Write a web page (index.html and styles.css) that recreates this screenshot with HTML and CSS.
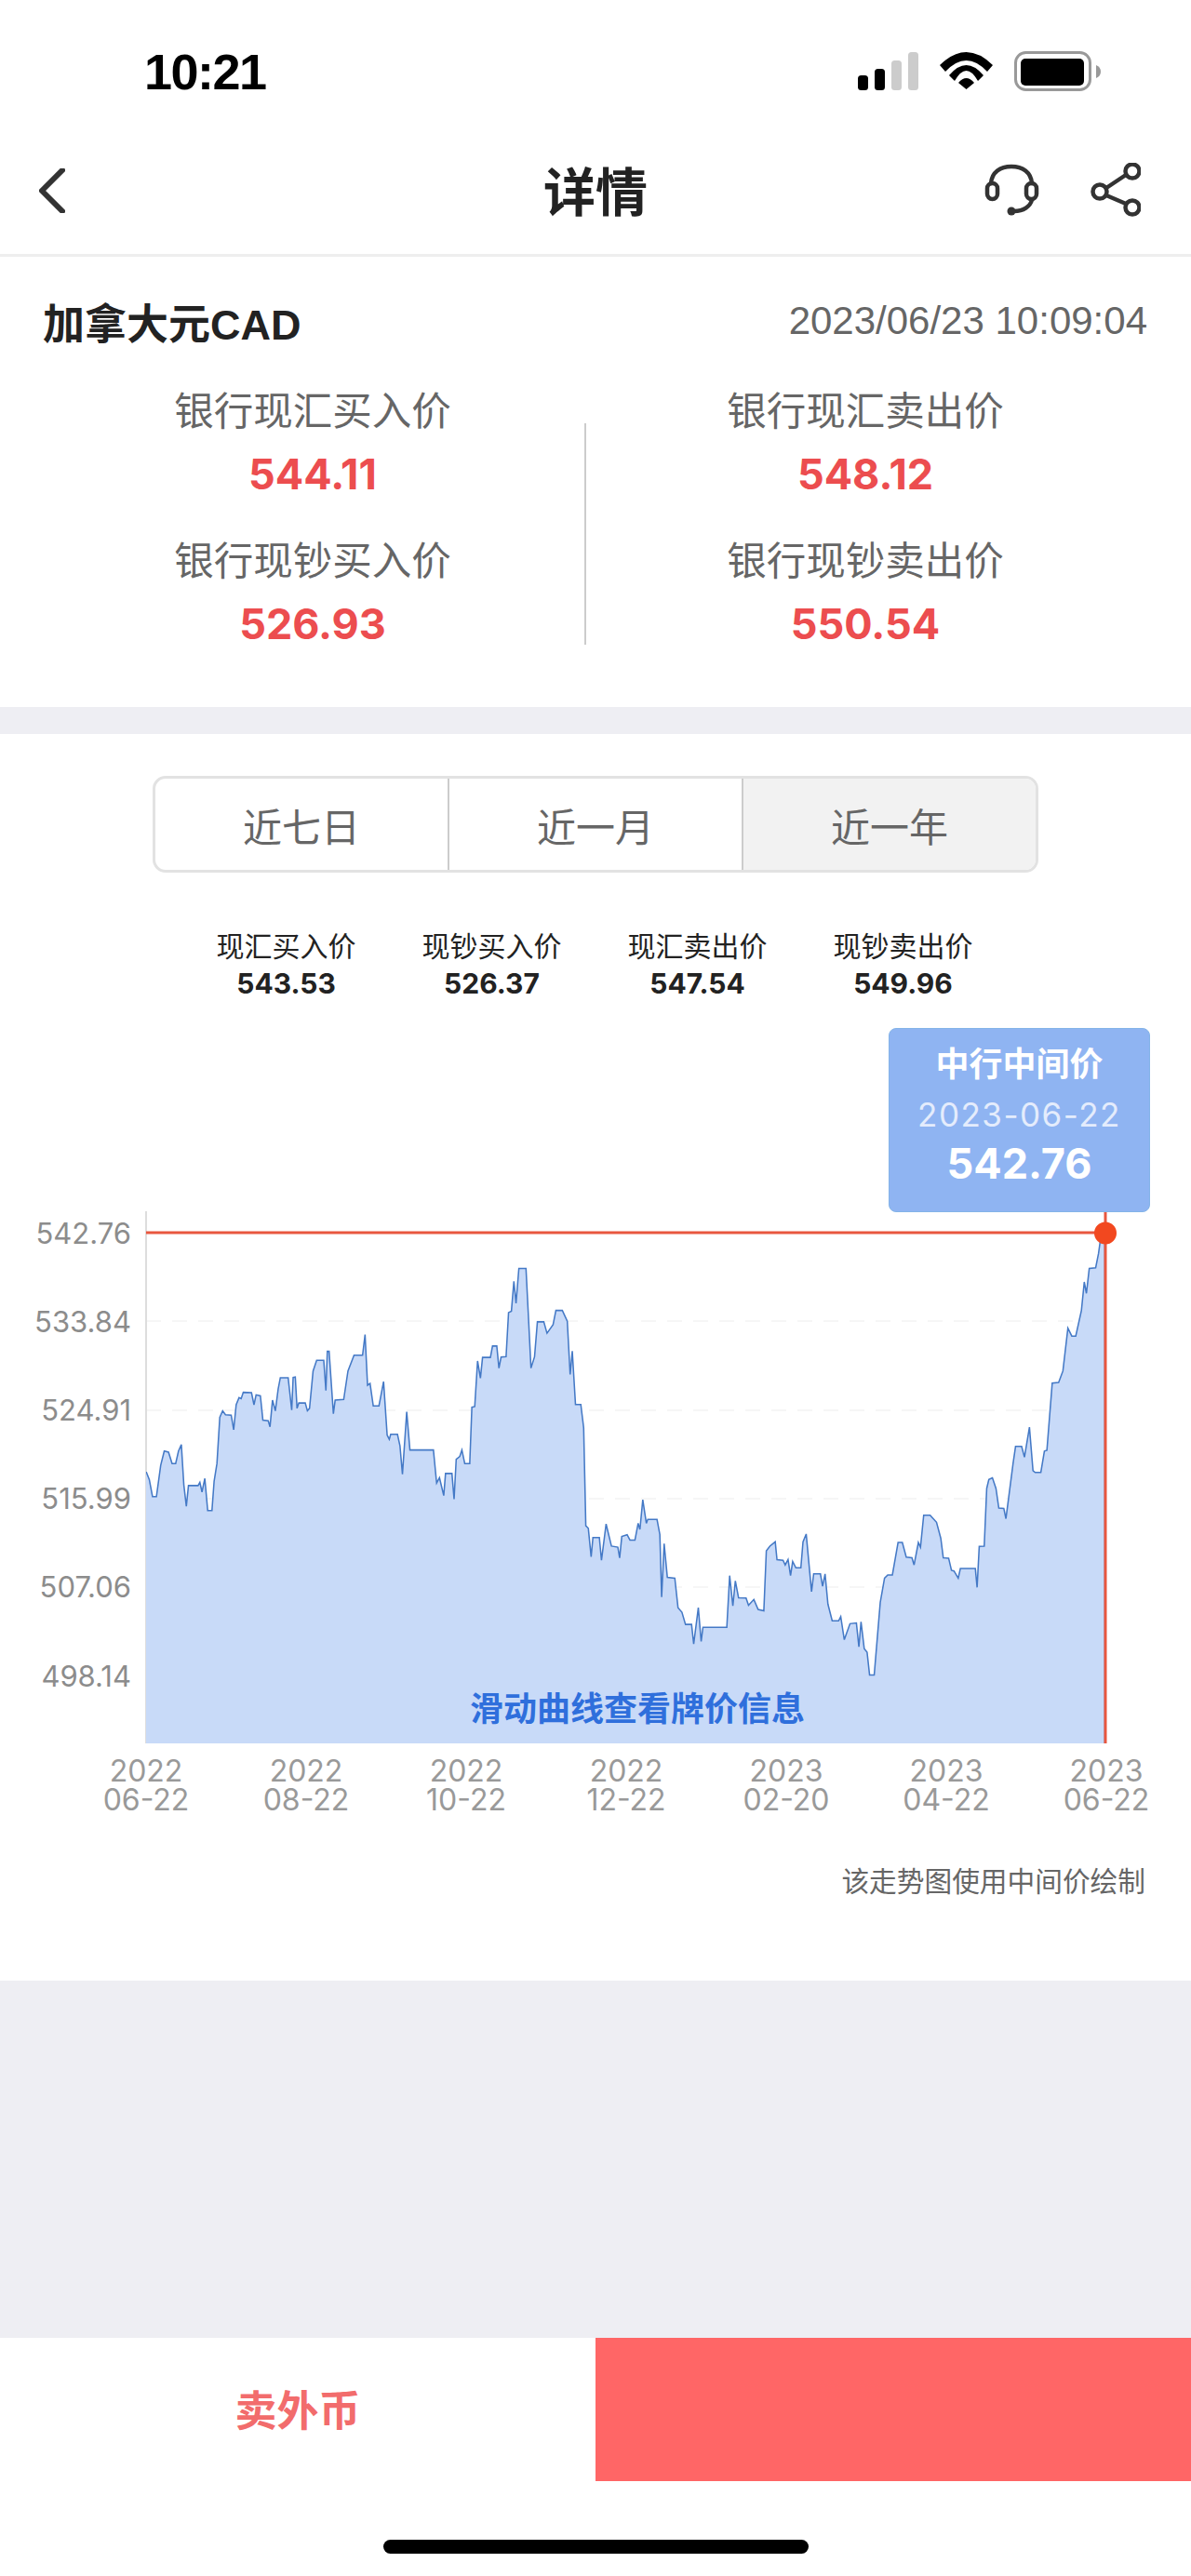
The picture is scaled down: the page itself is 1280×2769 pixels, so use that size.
FILE: index.html
```html
<!DOCTYPE html>
<html lang="zh">

<head>
  <meta charset="utf-8">
  <title>详情</title>
  <meta name="viewport" content="width=device-width, initial-scale=1.0">
  <link rel="stylesheet" href="styles.css">
</head>

<body>
  <div class="page">
    <!--status bar-->
    <div class="status">
      <span class="status-time">10:21</span>
      <div class="status-icons">
        <svg width="65" height="42" viewBox="0 0 65 42">
          <rect x="0" y="25" width="11" height="16" rx="3.5" fill="#000"/>
          <rect x="18" y="18" width="11" height="23" rx="3.5" fill="#000"/>
          <rect x="36" y="9" width="11" height="32" rx="3.5" fill="#ccc"/>
          <rect x="54" y="0" width="11" height="41" rx="3.5" fill="#ccc"/>
        </svg>
        <svg width="57" height="42" viewBox="0 0 57 42">
          <path d="M0 14Q28.5 -14 57 14L51 21Q28.5 -3 6 21Z" fill="#000"/>
          <path d="M10 25Q28.5 3 47 25L41 31Q28.5 9 16 31Z" fill="#000"/>
          <path d="M20 33Q28.5 23 37 33L28.5 40Z" fill="#000"/>
        </svg>
        <svg width="94" height="44" viewBox="0 0 94 44">
          <rect x="1.5" y="1.5" width="80" height="40" rx="11" fill="none" stroke="#999" stroke-width="3"/>
          <rect x="7" y="8" width="68" height="29" rx="5" fill="#000"/>
          <path d="M88 15Q93 17 93 22Q93 27 88 29Z" fill="#999"/>
        </svg>
      </div>
    </div>

    <!--title bar-->
    <header class="nav">
      <svg class="nav-back" width="28" height="48" viewBox="0 0 28 48">
        <path d="M25 2L3 24L25 46" fill="none" stroke="#333" stroke-width="6" stroke-linecap="round" stroke-linejoin="round"/>
      </svg>
      <h1 class="nav-title">详情</h1>
      <div class="nav-icons">
        <svg width="60" height="60" viewBox="0 0 60 60">
          <g fill="none" stroke="#333" stroke-width="4.5" stroke-linecap="round">
            <path d="M8 22C9 10 18 4 30 4C42 4 51 10 52 22"/>
            <rect x="4" y="22" width="11" height="17" rx="5.5"/>
            <rect x="46" y="22" width="11" height="17" rx="5.5"/>
            <path d="M52 40C50 47 43 52 33 52"/>
          </g>
          <circle cx="30" cy="52" r="4.5" fill="#333"/>
        </svg>
        <svg width="54" height="60" viewBox="0 0 54 60">
          <g fill="none" stroke="#333" stroke-width="4.5">
            <circle cx="10" cy="31" r="7.5"/>
            <circle cx="45" cy="9" r="7.5"/>
            <circle cx="45" cy="48" r="7.5"/>
            <path d="M17 27L38 13M17 35L38 44"/>
          </g>
        </svg>
      </div>
    </header>

    <!--quote card-->
    <section class="rate-card">
      <div class="rate-head">
        <h2 class="rate-name">加拿大元CAD</h2>
        <span class="rate-date">2023/06/23 10:09:04</span>
      </div>
      <div class="rate-grid">
        <div class="rate-col">
          <div class="rate-item">
            <p class="rate-label">银行现汇买入价</p>
            <p class="rate-value">544.11</p>
          </div>
          <div class="rate-item">
            <p class="rate-label">银行现钞买入价</p>
            <p class="rate-value">526.93</p>
          </div>
        </div>
        <div class="rate-divider"></div>
        <div class="rate-col">
          <div class="rate-item">
            <p class="rate-label">银行现汇卖出价</p>
            <p class="rate-value">548.12</p>
          </div>
          <div class="rate-item">
            <p class="rate-label">银行现钞卖出价</p>
            <p class="rate-value">550.54</p>
          </div>
        </div>
      </div>
    </section>

    <!--chart card-->
    <section class="chart-card">
      <div class="tabs">
        <div class="tab">近七日</div>
        <div class="tab">近一月</div>
        <div class="tab tab-active">近一年</div>
      </div>

      <div class="legend">
        <div class="legend-item"><p class="legend-label">现汇买入价</p><p class="legend-value">543.53</p></div>
        <div class="legend-item"><p class="legend-label">现钞买入价</p><p class="legend-value">526.37</p></div>
        <div class="legend-item"><p class="legend-label">现汇卖出价</p><p class="legend-value">547.54</p></div>
        <div class="legend-item"><p class="legend-label">现钞卖出价</p><p class="legend-value">549.96</p></div>
      </div>

      <div class="chart">
        <svg class="chart-svg" width="1280" height="804" viewBox="0 1076 1280 804">
          <defs>
            <clipPath id="plot"><rect x="157" y="1300" width="1031" height="574"/></clipPath>
          </defs>
          <path class="chart-grid" d="M157 1420H1188M157 1516H1188M157 1611H1188M157 1706H1188"/>
          <path class="chart-axis" d="M157 1302V1874"/>
          <g clip-path="url(#plot)">
            <polygon class="chart-area" transform="translate(100 1290) scale(.38265)" points="100,1560 100,765 150,765 158,785 167,833 178,833 190,745 200,705 212,708 222,740 232,740 240,705 248,687 255,800 262,860 268,802 295,802 300,793 306,820 314,782 322,872 334,872 340,790 348,740 356,610 364,592 372,603 388,604 395,645 402,575 410,555 416,558 422,540 445,541 452,575 458,547 470,550 477,618 492,620 497,637 504,562 512,592 520,530 526,499 548,499 558,590 562,498 568,497 573,585 578,570 596,570 602,592 608,585 618,480 628,450 648,450 654,535 658,425 663,425 675,600 680,562 704,560 716,480 733,436 757,436 764,378 771,520 778,515 787,578 803,578 816,510 826,660 832,672 836,658 855,658 862,690 869,770 881,595 890,702 956,702 965,795 973,780 985,830 990,768 1008,768 1014,840 1020,728 1030,720 1036,702 1044,740 1058,740 1064,582 1072,580 1080,452 1088,500 1094,442 1116,442 1122,410 1134,410 1140,472 1146,441 1160,440 1167,316 1175,312 1182,228 1188,290 1196,192 1216,192 1224,350 1230,472 1240,440 1248,342 1266,342 1275,374 1292,350 1300,310 1318,310 1332,340 1340,490 1346,424 1355,574 1370,574 1378,640 1384,915 1391,922 1399,1002 1404,948 1422,948 1428,1012 1441,910 1456,972 1474,975 1479,1005 1485,945 1500,940 1508,955 1522,955 1531,908 1536,925 1544,842 1554,908 1558,897 1584,897 1592,940 1597,1115 1604,965 1613,1060 1634,1062 1643,1145 1654,1158 1664,1192 1681,1192 1687,1247 1700,1145 1708,1240 1713,1200 1780,1200 1788,1055 1797,1140 1804,1070 1813,1117 1834,1118 1841,1138 1856,1122 1868,1150 1884,1154 1891,985 1901,972 1916,960 1921,1010 1938,1012 1944,1025 1952,1010 1959,1055 1965,1015 1974,1033 1988,1033 1994,960 2003,938 2018,1100 2024,1050 2043,1050 2049,1085 2056,1050 2064,1135 2076,1182 2094,1182 2100,1170 2110,1235 2126,1190 2144,1188 2151,1255 2157,1185 2166,1260 2174,1270 2181,1334 2194,1334 2211,1130 2223,1062 2232,1053 2245,1053 2261,962 2273,962 2284,1003 2300,1005 2306,1025 2318,962 2324,975 2333,885 2351,885 2369,905 2381,950 2388,1005 2403,1006 2411,1040 2418,1042 2430,1062 2436,1035 2478,1035 2483,1088 2489,973 2503,972 2510,810 2516,785 2526,780 2536,810 2544,865 2558,866 2564,895 2584,740 2591,692 2608,692 2616,722 2630,638 2640,760 2646,765 2662,765 2672,705 2679,703 2694,514 2712,512 2724,480 2738,360 2749,382 2760,382 2776,310 2784,230 2790,262 2798,192 2816,190 2824,150 2831,100 2842,93 2842,1560"/>
          </g>
          <path class="chart-cross" d="M157 1325H1188M1188 1300V1874"/>
          <circle class="chart-dot" cx="1188" cy="1325.5" r="12"/>
          <text class="chart-y" x="141" y="1337">542.76</text>
          <text class="chart-y" x="141" y="1432">533.84</text>
          <text class="chart-y" x="141" y="1527">524.91</text>
          <text class="chart-y" x="141" y="1622">515.99</text>
          <text class="chart-y" x="141" y="1717">507.06</text>
          <text class="chart-y" x="141" y="1813">498.14</text>
          <text class="chart-hint" x="685" y="1850">滑动曲线查看牌价信息</text>
        </svg>

        <div class="tip">
          <p class="tip-title">中行中间价</p>
          <p class="tip-date">2023-06-22</p>
          <p class="tip-value">542.76</p>
        </div>
      </div>

      <div class="x-axis">
        <div>2022<br>06-22</div>
        <div>2022<br>08-22</div>
        <div>2022<br>10-22</div>
        <div>2022<br>12-22</div>
        <div>2023<br>02-20</div>
        <div>2023<br>04-22</div>
        <div>2023<br>06-22</div>
      </div>

      <p class="chart-note">该走势图使用中间价绘制</p>
    </section>

    <div class="spacer"></div>

    <!--bottom buttons-->
    <div class="actions">
      <div class="action-sell">卖外币</div>
      <div class="action-buy"></div>
    </div>
    <div class="home">
      <div class="home-bar"></div>
    </div>
  </div>
</body>

</html>
```
FILE: styles.css
```css
:root {
  --sans: "Liberation Sans", "Noto Sans CJK SC", sans-serif;
  --wide: Inter, "Noto Sans CJK SC", sans-serif;
  --dark: #222;
  --grey: #666;
  --red: #ec4d4f;
  --page-bg: #eeeef3;
}

* {
  box-sizing: border-box;
}

body {
  margin: 0;
  font-family: var(--sans);
  background-color: var(--page-bg);
}

p,
h1,
h2 {
  margin: 0;
}

.page {
  display: flex;
  flex-direction: column;
  height: 2769px;
}

.status {
  display: flex;
  justify-content: space-between;
  align-items: center;
  height: 146px;
  padding: 8px 96px 0 155px;
  background-color: #fff;
}

.status-time {
  font-size: 54px;
  font-weight: bold;
  letter-spacing: -1.5px;
  color: #000;
}

.status-icons {
  display: flex;
  align-items: center;
  gap: 23px;
}

.status-icons svg {
  display: block;
}

.nav {
  display: grid;
  grid-template-columns: 1fr auto 1fr;
  align-items: center;
  height: 130px;
  padding: 0 54px 9px;
  background-color: #fff;
  border-bottom: 3px solid #eee;
}

.nav-back {
  margin-left: -12px;
}

.nav-title {
  margin-bottom: 6px;
  font-size: 56px;
  font-weight: bold;
  color: var(--dark);
}

.nav-icons {
  display: flex;
  justify-content: flex-end;
  gap: 55px;
}

.rate-card {
  margin-bottom: 29px;
  padding: 46px 47px 61px 46px;
  background-color: #fff;
}

.rate-head {
  display: flex;
  justify-content: space-between;
  align-items: flex-start;
}

.rate-name {
  font-size: 45px;
  line-height: 56px;
  font-weight: bold;
  color: var(--dark);
}

.rate-date {
  font-size: 42px;
  line-height: 46px;
  color: var(--grey);
}

.rate-grid {
  display: grid;
  grid-template-columns: 472px 2px 488px;
  column-gap: 56px;
  margin-top: 35px;
  padding-left: 54px;
}

.rate-col {
  display: flex;
  flex-direction: column;
  gap: 36px;
  text-align: center;
}

.rate-divider {
  height: 238px;
  margin-top: 42px;
  background-color: #ccc;
}

.rate-label {
  font-size: 42.5px;
  line-height: 60px;
  color: var(--grey);
}

.rate-value {
  margin-top: 9px;
  font-family: var(--wide);
  font-size: 45px;
  line-height: 56px;
  font-weight: bold;
  color: var(--red);
}

.chart-card {
  padding: 45px 0 86px;
  background-color: #fff;
}

.tabs {
  display: grid;
  grid-template-columns: 316px 316px 1fr;
  width: 952px;
  height: 104px;
  margin: 0 auto;
  border: 3px solid #e2e2e2;
  border-radius: 14px;
  overflow: hidden;
}

.tab {
  display: flex;
  justify-content: center;
  align-items: center;
  font-size: 42px;
  color: var(--grey);
  border-right: 2px solid #ccc;
}

.tab-active {
  background-color: #f2f2f2;
  border-right: 0;
}

.legend {
  display: grid;
  grid-template-columns: repeat(4, 221px);
  margin-top: 60px;
  padding-left: 197px;
  text-align: center;
}

.legend-label {
  font-size: 30px;
  line-height: 40px;
  color: var(--dark);
}

.legend-value {
  font-family: var(--wide);
  font-size: 30px;
  line-height: 38px;
  font-weight: bold;
  color: var(--dark);
}

.chart {
  position: relative;
}

.chart-svg {
  display: block;
}

.chart-grid {
  fill: none;
  stroke: #f3f3f3;
  stroke-width: 1.5;
  stroke-dasharray: 16 12;
}

.chart-axis {
  fill: none;
  stroke: #ddd;
  stroke-width: 2;
}

.chart-area {
  fill: #c8daf8;
  stroke: #4479c6;
  stroke-width: 4;
}

.chart-cross {
  fill: none;
  stroke: #e8573f;
  stroke-width: 3;
}

.chart-dot {
  fill: #f2481f;
}

.chart-y {
  font-family: var(--wide);
  font-size: 31px;
  text-anchor: end;
  fill: #8c8c8c;
}

.chart-hint {
  font-size: 36px;
  font-weight: bold;
  text-anchor: middle;
  fill: #2f6fdc;
}

/* tooltip sits over the chart */
.tip {
  position: absolute;
  top: 29px;
  left: 955px;
  width: 281px;
  height: 198px;
  padding-top: 16px;
  background-color: #8fb4f2;
  border: 1px solid #84b4e8;
  border-radius: 8px;
  color: #fff;
  text-align: center;
}

.tip-title {
  font-size: 36px;
  line-height: 46px;
  font-weight: bold;
}

.tip-date {
  margin-top: 8px;
  font-family: var(--wide);
  font-size: 35px;
  line-height: 44px;
  letter-spacing: 1.5px;
  color: #e4ecfc;
}

.tip-value {
  font-family: var(--wide);
  font-size: 45px;
  line-height: 62px;
  font-weight: bold;
}

.x-axis {
  display: grid;
  grid-template-columns: repeat(7, 172px);
  margin-top: 8px;
  padding-left: 71px;
  font-family: var(--wide);
  font-size: 32px;
  line-height: 31px;
  color: #999;
  text-align: center;
}

.chart-note {
  margin-top: 53px;
  padding-right: 49px;
  font-size: 29.7px;
  line-height: 40px;
  color: var(--grey);
  text-align: right;
}

.spacer {
  flex: 1;
}

.actions {
  display: grid;
  grid-template-columns: 1fr 1fr;
  height: 154px;
  background-color: #fff;
}

.action-sell {
  display: flex;
  justify-content: center;
  align-items: center;
  padding-bottom: 4px;
  font-size: 45px;
  font-weight: bold;
  color: #f26c6c;
}

.action-buy {
  background-color: #ff6666;
}

.home {
  height: 102px;
  padding-top: 63px;
  background-color: #fff;
}

.home-bar {
  width: 457px;
  height: 15px;
  margin: 0 auto;
  background-color: #000;
  border-radius: 8px;
}
```
